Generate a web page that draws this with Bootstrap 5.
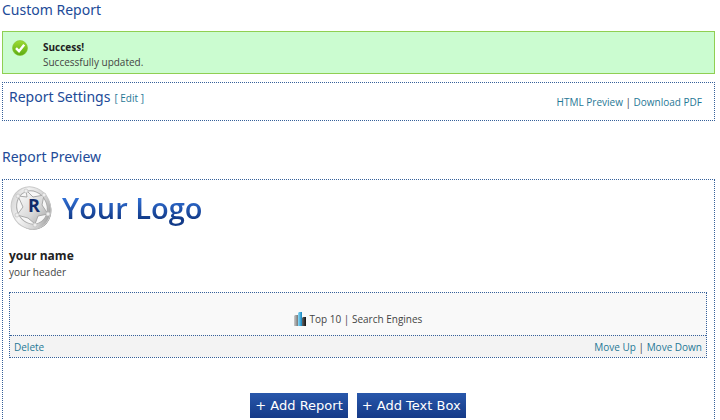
<!DOCTYPE html>
<html lang="en">
<head>
<meta charset="utf-8">
<meta name="viewport" content="width=device-width, initial-scale=1">
<title>Custom Report</title>
<link href="https://cdn.jsdelivr.net/npm/bootstrap@5.3.0/dist/css/bootstrap.min.css" rel="stylesheet">
<style>
body { font: 10px/16px "Open Sans", sans-serif; color: #444; background: #fff; }
.report-page { padding: 0 5px 0 2px; }
a { color: #1f7896; text-decoration: none; }
a:hover { text-decoration: underline; }
.section-title { font: 14px/20px "Noto Sans", sans-serif; color: #214a98; margin: 0; }
.notice { background: #cbfcd0; border: 1px solid #8fcf52; border-radius: 0; color: #444; margin: 11px 0 8px; padding: 8px 9px 3px; gap: 15px; line-height: 15px; }
.notice strong { color: #222; }
.dashed { border: 1px dotted #35609a; }
.settings { padding: 4px 12px 10px 6px; margin-bottom: 26px; }
.settings-links { padding-top: 7px; }
.preview { margin-top: 12px; padding: 6px 7px 24px 6px; }
.brand { gap: 10px; }
.logo-text { font: 600 29px/44px "Open Sans", sans-serif; background: linear-gradient(#3272d8 25%, #123a88 75%); -webkit-background-clip: text; background-clip: text; color: transparent; }
.owner { font: 700 12px/17px "Open Sans", sans-serif; color: #222; margin: 17px 0 0; }
.module { margin-top: 12px; background: #f9f9f9; }
.module-body { padding: 18px 0 8px; }
.module-foot { background: #f3f3f3; border-top: 1px dotted #35609a; padding: 3px 4px 2px; }
.actions { margin-top: 35px; gap: 9px; }
.btn-add { font: 13px/25px "DejaVu Sans", sans-serif; color: #fff; background: linear-gradient(#2857ab, #153a87); border: 0; border-radius: 0; padding: 0 5px; }
.btn-add:hover { color: #fff; background: #153a87; }
</style>
<script src="https://cdn.jsdelivr.net/npm/bootstrap@5.3.0/dist/js/bootstrap.bundle.min.js"></script>
</head>
<body>
<main class="report-page">
  <h1 class="section-title">Custom Report</h1>
  <div class="alert notice d-flex align-items-start" role="alert">
    <svg width="16" height="16" viewBox="0 0 16 16" aria-hidden="true">
      <defs><linearGradient id="ok" x2="0" y2="1"><stop stop-color="#9ddb35"/><stop offset="1" stop-color="#5dab10"/></linearGradient></defs>
      <circle cx="8" cy="8" r="7.5" fill="url(#ok)" stroke="#82c52d" stroke-width=".6"/>
      <path d="M4 8.2 7 11.2 12.2 4.8" fill="none" stroke="#fff" stroke-width="2.4"/>
    </svg>
    <div><strong class="d-block">Success!</strong>Successfully updated.</div>
  </div>
  <section class="dashed settings d-flex justify-content-between">
    <div class="d-flex align-items-baseline gap-1">
      <h2 class="section-title">Report Settings</h2>
      <a href="#edit">[ Edit ]</a>
    </div>
    <div class="settings-links"><a href="#html">HTML Preview</a> | <a href="#pdf">Download PDF</a></div>
  </section>
  <h2 class="section-title">Report Preview</h2>
  <section class="dashed preview">
    <div class="brand d-flex align-items-center">
      <svg width="43" height="44" viewBox="0 0 43 44" aria-hidden="true">
        <defs>
          <linearGradient id="metal" x2="1" y2="1"><stop stop-color="#c4c4c4"/><stop offset=".35" stop-color="#f4f4f4"/><stop offset=".7" stop-color="#cfcfcf"/><stop offset="1" stop-color="#777"/></linearGradient>
          <linearGradient id="star" x2="1" y2="1"><stop stop-color="#fff"/><stop offset=".6" stop-color="#d8d8d8"/><stop offset="1" stop-color="#a2a2a2"/></linearGradient>
        </defs>
        <ellipse cx="23" cy="23" rx="19" ry="21" transform="rotate(-25 23 23)" fill="#888"/>
        <ellipse cx="22" cy="22" rx="19.5" ry="21.5" transform="rotate(-25 22 22)" fill="url(#metal)" stroke="#c8c8c8"/>
        <ellipse cx="23" cy="21.500" rx="15" ry="17" transform="rotate(-25 23 21.500)" fill="#f7f7f7" stroke="#aaa"/>
        <path d="M17 4 24 11 35 9 33 19 39 28 29 30 26 38 19 32 8 29 14 21 9 10 18 11Z" fill="url(#star)" stroke="#a2a2a2" stroke-width=".9"/>
        <g fill="#eee" stroke="#bbb" stroke-width=".6"><circle cx="17" cy="5" r="2"/><circle cx="35" cy="9" r="2"/><circle cx="39" cy="28" r="2"/><circle cx="26" cy="39" r="2"/><circle cx="8" cy="29" r="2"/><circle cx="9" cy="10" r="2"/></g>
        <text x="25" y="26" text-anchor="middle" font-family="Open Sans, sans-serif" font-weight="700" font-size="18" fill="#102b6b">R</text>
      </svg>
      <span class="logo-text">Your Logo</span>
    </div>
    <h3 class="owner">your name</h3>
    <div>your header</div>
    <article class="dashed module">
      <div class="module-body d-flex justify-content-center align-items-center gap-1">
        <svg width="12" height="14" viewBox="0 0 12 14" aria-hidden="true">
          <defs>
            <linearGradient id="b1"><stop stop-color="#ccc"/><stop offset="1" stop-color="#777"/></linearGradient>
            <linearGradient id="b2"><stop stop-color="#8fdcf8"/><stop offset="1" stop-color="#1385c0"/></linearGradient>
            <linearGradient id="b3"><stop stop-color="#666"/><stop offset="1" stop-color="#111"/></linearGradient>
          </defs>
          <path d="M0 4l1-1h3v11H0z" fill="url(#b1)"/><path d="M4 1l1-1h3v14H4z" fill="url(#b2)"/><path d="M8 6l1-1h3v9H8z" fill="url(#b3)"/>
        </svg>
        <span>Top 10 | Search Engines</span>
      </div>
      <div class="module-foot d-flex justify-content-between">
        <a href="#delete">Delete</a>
        <div><a href="#up">Move Up</a> | <a href="#down">Move Down</a></div>
      </div>
    </article>
    <div class="actions d-flex justify-content-center">
      <button type="button" class="btn btn-add">+ Add Report</button>
      <button type="button" class="btn btn-add">+ Add Text Box</button>
    </div>
  </section>
</main>
</body>
</html>
